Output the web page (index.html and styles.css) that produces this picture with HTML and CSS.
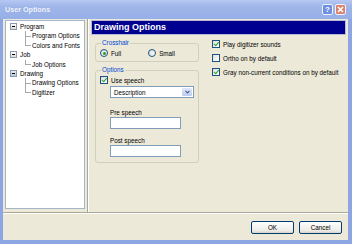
FILE: index.html
```html
<!DOCTYPE html>
<html lang="en">
<head>
  <meta charset="UTF-8" />
  <title>User Options</title>
  <link rel="stylesheet" href="styles.css">
</head>
<body>
  <div class="window">
    <div class="titlebar">
      <span class="title">User Options</span>
      <span class="tb-btn help">?</span>
      <span class="tb-btn close">
        <svg width="7" height="7" viewBox="0 0 7 7"><path d="M1 1L6 6M6 1L1 6" stroke="#fff" stroke-width="1.6"/></svg>
      </span>
    </div>

    <div class="frame">
      <div class="main">
        <div class="tree">
          <div class="node"><span class="expander"></span>Program</div>
          <div class="leaf">Program Options</div>
          <div class="leaf last">Colors and Fonts</div>
          <div class="node"><span class="expander"></span>Job</div>
          <div class="leaf last">Job Options</div>
          <div class="node"><span class="expander open"></span>Drawing</div>
          <div class="leaf">Drawing Options</div>
          <div class="leaf last">Digitizer</div>
        </div>
        <div class="vsep"></div>

        <div class="pane">
          <div class="pane-head">Drawing Options</div>
          <div class="pane-body">
            <div class="col-left">
              <fieldset class="group crosshair">
                <legend>Crosshair</legend>
                <div class="radios">
                  <label class="opt"><span class="radio on"></span>Full</label>
                  <label class="opt"><span class="radio"></span>Small</label>
                </div>
              </fieldset>

              <fieldset class="group options">
                <legend>Options</legend>
                <label class="opt"><span class="check on"></span>Use speech</label>
                <div class="indent">
                  <div class="select">
                    <span class="select-text">Description</span>
                    <span class="select-btn">
                      <svg width="5" height="4" viewBox="0 0 5 4"><path d="M0.5 0.8L2.5 2.8L4.5 0.8" fill="none" stroke="#4d6185" stroke-width="1.2"/></svg>
                    </span>
                  </div>
                  <div class="field-label">Pre speech</div>
                  <div class="textbox"></div>
                  <div class="field-label">Post speech</div>
                  <div class="textbox"></div>
                </div>
              </fieldset>
            </div>

            <div class="col-right">
              <label class="opt"><span class="check on"></span>Play digitizer sounds</label>
              <label class="opt"><span class="check"></span>Ortho on by default</label>
              <label class="opt"><span class="check on"></span>Gray non-current conditions on by default</label>
            </div>
          </div>
        </div>
      </div>

      <div class="footer">
        <span class="button">OK</span>
        <span class="button">Cancel</span>
      </div>
    </div>
  </div>
</body>
</html>
```

FILE: styles.css
```css
* {
  box-sizing: border-box;
  margin: 0;
  padding: 0;
}

body {
  background: #ffffff;
  font-family: 'Liberation Sans', Arial, sans-serif;
  font-size: 6.3px;
  color: #000;
}

.window {
  width: 352px;
  height: 244px;
  display: flex;
  flex-direction: column;
}

/* title bar */
.titlebar {
  height: 19px;
  display: flex;
  align-items: center;
  gap: 2px;
  padding: 0 6px 0 5px;
  background: linear-gradient(#b6c8f2, #9fb6ea 35%, #97afe8);
}

.title {
  flex: 1;
  color: #f2f5fd;
  font-size: 7.2px;
  font-weight: bold;
  text-shadow: 0 0 1px #8aa0d8;
}

.tb-btn {
  width: 11px;
  height: 11px;
  border: 1px solid #eef2fc;
  border-radius: 2px;
  display: flex;
  align-items: center;
  justify-content: center;
  color: #fff;
  font-size: 8px;
  font-weight: bold;
}

.help {
  background: #6f90e0;
}

.close {
  background: #d9836f;
}

/* window body */
.frame {
  flex: 1;
  display: flex;
  flex-direction: column;
  background: #ece9d8;
  border: 3px solid #8ea5e3;
  border-top: 0;
  border-right-width: 4px;
  border-bottom-width: 4px;
}

.main {
  flex: 1;
  display: flex;
  padding-top: 1px;
}

/* tree */
.tree {
  width: 80px;
  height: 189px;
  margin-left: 2px;
  background: #fff;
  border: 1px solid #a5b6cb;
  padding-top: 1px;
}

.node,
.leaf {
  height: 9.4px;
  line-height: 9.4px;
  white-space: nowrap;
  position: relative;
}

.node {
  display: flex;
  align-items: center;
  gap: 3px;
  padding-left: 4px;
}

.expander {
  width: 7px;
  height: 7px;
  border: 1px solid #8a9bb0;
  background: linear-gradient(#fff, #dcdcd4);
  position: relative;
}

.expander::after {
  content: '';
  position: absolute;
  left: 1px;
  right: 1px;
  top: 2px;
  height: 1px;
  background: #000;
}

.expander.open {
  background: linear-gradient(#e8ecf4, #b8c4d8);
}

.leaf {
  padding-left: 26px;
}

.leaf::before {
  content: '';
  position: absolute;
  left: 19px;
  top: 0;
  bottom: 0;
  border-left: 1px solid #a8a8a8;
}

.leaf.last::before {
  bottom: 50%;
}

.leaf::after {
  content: '';
  position: absolute;
  left: 19px;
  top: 50%;
  width: 6px;
  border-top: 1px solid #a8a8a8;
}

.vsep {
  width: 2px;
  margin-left: 2px;
  margin-top: -1px;
  border-left: 1px solid #aca899;
  border-right: 1px solid #fff;
}

/* right pane */
.pane {
  flex: 1;
  padding: 0 2px 0 2px;
}

.pane-head {
  height: 15px;
  border: 1px solid #b9b9d6;
  background: #000090;
  color: #fff;
  font-size: 9px;
  font-weight: bold;
  line-height: 13px;
  padding-left: 2px;
}

.pane-body {
  display: flex;
  padding: 4px 0 0 4px;
}

.col-left {
  width: 104px;
  display: flex;
  flex-direction: column;
  gap: 4px;
}

.group {
  border: 1px solid #d0d0bf;
  border-radius: 3px;
  padding: 0 4px;
}

.group legend {
  color: #0046d5;
  line-height: 8px;
  margin-left: 1px;
  padding: 0 1px;
}

.crosshair {
  padding-top: 2px;
  padding-bottom: 4px;
}

.radios {
  display: flex;
  gap: 27px;
}

.options {
  padding-top: 2px;
  padding-bottom: 5px;
}

.opt {
  display: flex;
  align-items: center;
  gap: 3px;
  height: 8px;
  white-space: nowrap;
}

.radio {
  width: 8px;
  height: 8px;
  border: 1px solid #1c5180;
  border-radius: 50%;
  background: linear-gradient(135deg, #dcdcd7, #fff);
  display: flex;
  align-items: center;
  justify-content: center;
}

.radio.on::after {
  content: '';
  width: 3px;
  height: 3px;
  border-radius: 50%;
  background: #21a121;
}

.check {
  width: 8px;
  height: 8px;
  border: 1px solid #1c5180;
  background: linear-gradient(135deg, #dcdcd7, #fff);
  position: relative;
}

.check.on::after {
  content: '';
  position: absolute;
  left: 1.5px;
  top: 0;
  width: 2px;
  height: 3.5px;
  border: solid #21a121;
  border-width: 0 1.3px 1.3px 0;
  transform: rotate(40deg);
}

.indent {
  padding-left: 10px;
  padding-top: 2px;
}

.select {
  width: 84px;
  height: 12px;
  border: 1px solid #7f9db9;
  background: #fff;
  display: flex;
  align-items: center;
  padding: 1px;
}

.select-text {
  flex: 1;
  padding-left: 2px;
}

.select-btn {
  width: 10px;
  height: 100%;
  border-radius: 1px;
  background: linear-gradient(#e1e9fb, #b9cbf3);
  display: flex;
  align-items: center;
  justify-content: center;
}

.field-label {
  line-height: 8px;
  margin-top: 8px;
  margin-bottom: 0;
}

.select + .field-label {
  margin-top: 11px;
}

.textbox {
  width: 71px;
  height: 12px;
  border: 1px solid #7f9db9;
  background: #fff;
}

.col-right {
  padding-left: 13px;
  padding-top: 1px;
  display: flex;
  flex-direction: column;
  gap: 6px;
}

/* footer */
.footer {
  height: 28px;
  border-top: 1px solid #aca899;
  box-shadow: inset 0 1px 0 #fff;
  display: flex;
  justify-content: flex-end;
  gap: 5px;
  padding: 8px 6px 0 0;
}

.button {
  width: 43px;
  height: 13px;
  border: 1px solid #003c74;
  border-radius: 2px;
  background: linear-gradient(#fff, #ecebe6 80%, #d6d0c5);
  display: flex;
  align-items: center;
  justify-content: center;
}
```
